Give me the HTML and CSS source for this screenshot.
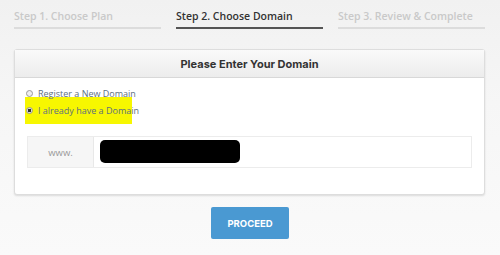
FILE: index.html
```html
<!DOCTYPE html>
<html>
<head>
<meta charset="utf-8">
<link rel="stylesheet" href="styles.css">
</head>
<body>
<div class="page">
  <div class="steps">
    <div class="step">Step 1. Choose Plan</div>
    <div class="step active">Step 2. Choose Domain</div>
    <div class="step">Step 3. Review &amp; Complete</div>
  </div>
  <div class="panel">
    <div class="panel-head">Please Enter Your Domain</div>
    <div class="panel-body">
      <label class="opt"><span class="radio"></span>Register a New Domain</label>
      <label class="opt hl"><span class="radio checked"></span>I already have a Domain</label>
      <div class="group">
        <div class="addon">www.</div>
        <div class="field"><span class="redact"></span></div>
      </div>
    </div>
  </div>
  <div class="actions"><button class="btn">PROCEED</button></div>
</div>
</body>
</html>
```
FILE: styles.css
```css
* { box-sizing: border-box; }
html, body { margin: 0; padding: 0; }
body {
  width: 500px; height: 255px; overflow: hidden;
  background: linear-gradient(#f1f1f1, #f6f6f6 40%, #fafafa);
  font-family: "Open Sans", sans-serif;
}
.page { padding: 0 15px 0 14px; }
.steps { display: flex; gap: 15px; padding-top: 9px; }
.step {
  flex: 1; font-size: 10.5px; font-weight: 600; color: #c9c9c9;
  padding-bottom: 3px; border-bottom: 2px solid #dcdcdc; line-height: 15px;
}
.step.active { color: #333; border-bottom-color: #555; }
.panel {
  margin-top: 20px; background: #fff; border: 1px solid #dddddd; border-radius: 3px;
  box-shadow: 0 1px 2px rgba(0,0,0,0.12); height: 146px;
}
.panel-head {
  height: 28px; line-height: 28px; text-align: center;
  font-family: "Inter", sans-serif; font-weight: 700; font-size: 11px; color: #333;
  background: linear-gradient(#fafafa, #ececec); border-bottom: 1px solid #d8d8d8;
}
.panel-body { padding: 6px 12px 0 10px; }
.opt {
  display: flex; align-items: center; width: 107px; height: 18px;
  font-size: 9px; color: #5d6f80; white-space: nowrap;
}
.opt.hl { background: #f7f700; height: 27px; margin-top: -5px; }
.radio {
  width: 7px; height: 7px; border-radius: 50%; border: 1px solid #999;
  background: #eee; margin: 0 5px 0 1px; flex: none;
}
.radio.checked { background: radial-gradient(#333 40%, #ddd 50%); }
.group {
  display: flex; margin-top: 12px; height: 32px; margin-left: 2px;
  border: 1px solid #ececec;
}
.addon {
  width: 66px; background: #f6f6f6; border-right: 1px solid #e8e8e8;
  display: flex; align-items: center; justify-content: center;
  font-size: 9.5px; color: #999;
}
.field { flex: 1; padding: 3px 6px; }
.redact { display: block; width: 140px; height: 23px; background: #000; border-radius: 5px; }
.actions { display: flex; justify-content: center; padding-top: 12px; padding-left: 1px; }
.btn {
  width: 78px; height: 32px; border: none; border-radius: 2px;
  background: #4a99d2; color: #fff; font-family: "Inter", sans-serif; font-weight: 700;
  font-size: 9.5px;
}
```
